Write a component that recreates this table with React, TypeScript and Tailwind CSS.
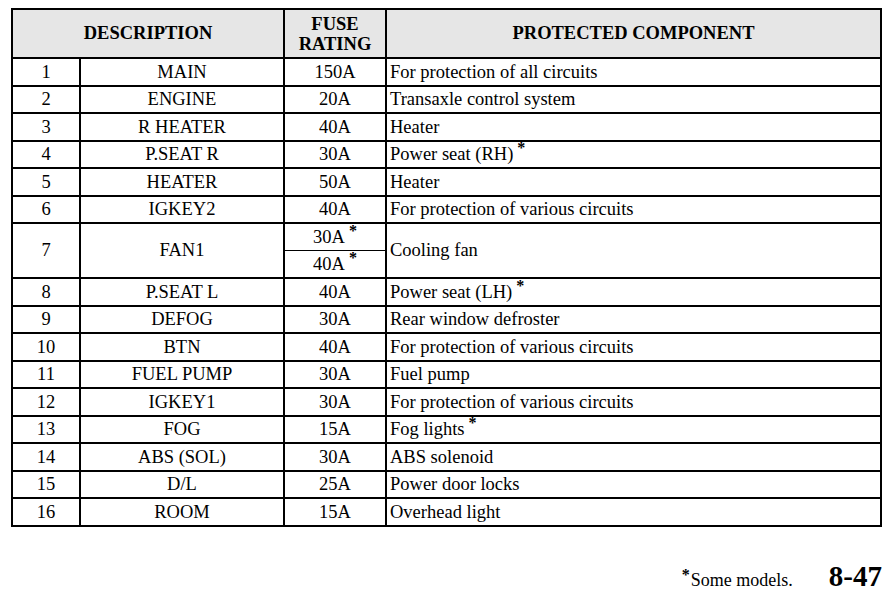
const rows = [
  { n: "1", d: "MAIN", f: "150A", p: "For protection of all circuits" },
  { n: "2", d: "ENGINE", f: "20A", p: "Transaxle control system" },
  { n: "3", d: "R HEATER", f: "40A", p: "Heater" },
  { n: "4", d: "P.SEAT R", f: "30A", p: "Power seat (RH)", star: true },
  { n: "5", d: "HEATER", f: "50A", p: "Heater" },
  { n: "6", d: "IGKEY2", f: "40A", p: "For protection of various circuits" },
];

const rows2 = [
  { n: "8", d: "P.SEAT L", f: "40A", p: "Power seat (LH)", star: true },
  { n: "9", d: "DEFOG", f: "30A", p: "Rear window defroster" },
  { n: "10", d: "BTN", f: "40A", p: "For protection of various circuits" },
  { n: "11", d: "FUEL PUMP", f: "30A", p: "Fuel pump" },
  { n: "12", d: "IGKEY1", f: "30A", p: "For protection of various circuits" },
  { n: "13", d: "FOG", f: "15A", p: "Fog lights", star: true },
  { n: "14", d: "ABS (SOL)", f: "30A", p: "ABS solenoid" },
  { n: "15", d: "D/L", f: "25A", p: "Power door locks" },
  { n: "16", d: "ROOM", f: "15A", p: "Overhead light" },
];

function Star() {
  return <span className="relative -top-[7px] ml-[4px] text-[16px] font-bold">*</span>;
}

type Row = { n: string; d: string; f: string; p: string; star?: boolean };

function Line({ r }: { r: Row }) {
  return (
    <tr className="h-[27.5px]">
      <td className="border-2 border-black text-center">{r.n}</td>
      <td className="border-2 border-black text-center">{r.d}</td>
      <td className="border-2 border-black text-center">{r.f}</td>
      <td className="border-2 border-black pl-[3px]">
        {r.p}
        {r.star && <Star />}
      </td>
    </tr>
  );
}

export default function App() {
  return (
    <div className="w-[886px] h-[593px] overflow-hidden bg-white text-black font-['Liberation_Serif',serif] text-[18.5px] leading-none">
      <div className="pt-[8px] pl-[11px]">
        <table className="w-[871px] border-collapse border-2 border-black table-fixed">
          <colgroup>
            <col className="w-[68px]" />
            <col className="w-[204px]" />
            <col className="w-[102px]" />
            <col />
          </colgroup>
          <thead>
            <tr className="h-[49px] bg-[#e6e6e6] font-bold">
              <th colSpan={2} className="border-2 border-black text-center">DESCRIPTION</th>
              <th className="border-2 border-black text-center leading-[20px]">
                FUSE
                <br />
                RATING
              </th>
              <th className="border-2 border-black text-center">PROTECTED COMPONENT</th>
            </tr>
          </thead>
          <tbody>
            {rows.map((r) => (
              <Line key={r.n} r={r} />
            ))}
            <tr className="h-[27.5px]">
              <td rowSpan={2} className="border-2 border-black text-center">7</td>
              <td rowSpan={2} className="border-2 border-black text-center">FAN1</td>
              <td className="border-2 border-b border-black text-center">
                30A
                <Star />
              </td>
              <td rowSpan={2} className="border-2 border-black pl-[3px]">Cooling fan</td>
            </tr>
            <tr className="h-[27.5px]">
              <td className="border-2 border-t border-black text-center">
                40A
                <Star />
              </td>
            </tr>
            {rows2.map((r) => (
              <Line key={r.n} r={r} />
            ))}
          </tbody>
        </table>
      </div>
      <div className="flex items-baseline justify-end pr-[4px] pt-[35px]">
        <span className="text-[18px]">
          <span className="relative -top-[6px] mr-[1px] text-[16px] font-bold">*</span>
          Some models.
        </span>
        <span className="ml-[36px] text-[29px] font-bold">8-47</span>
      </div>
    </div>
  );
}
